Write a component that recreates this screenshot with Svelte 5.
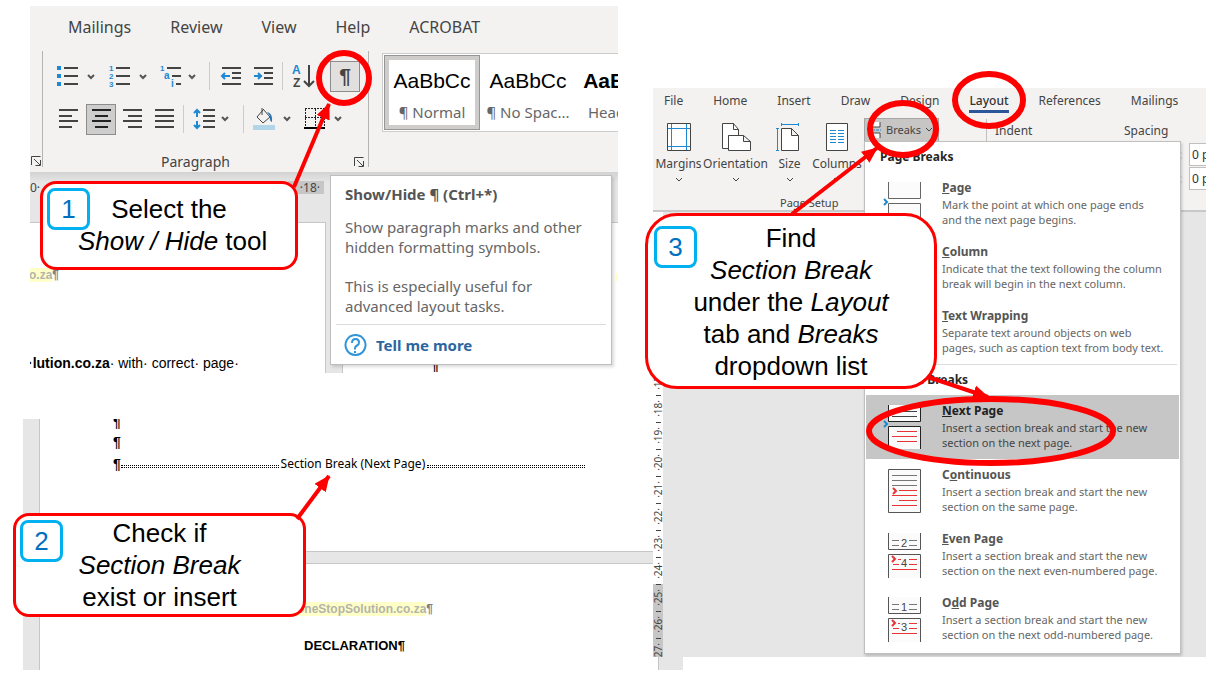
<script lang="ts">
  type Shape = {
    d?: string;
    s?: string;
    f?: string;
    w?: number;
    dash?: string;
    t?: string;
    x?: number;
    y?: number;
    size?: number;
    bold?: boolean;
  };

  type Icon = { w: number; h: number; shapes: Shape[] };

  type Tool = { icon: string; label: string; gap: number; active?: boolean; sep?: boolean };

  const ink = '#444444';
  const blue = '#1e88d2';
  const red = '#e83434';

  const chevron = (x: number, y: number): Shape => ({
    d: `M${x} ${y}l3 3l3-3`,
    s: '#555555',
    w: 2,
  });

  const icons: Record<string, Icon> = {
    bullets: {
      w: 38,
      h: 24,
      shapes: [
        { d: 'M0 2h4v4h-4zM0 10h4v4h-4zM0 18h4v4h-4z', f: blue },
        { d: 'M7 4h14M7 12h14M7 20h14', s: ink, w: 2 },
        chevron(31, 11),
      ],
    },
    numbering: {
      w: 38,
      h: 24,
      shapes: [
        { t: '1', x: 0, y: 7, size: 8, f: blue, bold: true },
        { t: '2', x: 0, y: 15, size: 8, f: blue, bold: true },
        { t: '3', x: 0, y: 23, size: 8, f: blue, bold: true },
        { d: 'M7 4h14M7 12h14M7 20h14', s: ink, w: 2 },
        chevron(31, 11),
      ],
    },
    multilevel: {
      w: 38,
      h: 24,
      shapes: [
        { t: '1', x: 0, y: 7, size: 8, f: blue, bold: true },
        { t: 'a', x: 4, y: 15, size: 10, f: blue, bold: true },
        { t: 'i', x: 11, y: 23, size: 10, f: blue, bold: true },
        { d: 'M7 4h14M12 12h9M16 20h5', s: ink, w: 2 },
        chevron(29, 11),
      ],
    },
    outdent: {
      w: 20,
      h: 24,
      shapes: [
        { d: 'M1 4h19M11 9h9M11 14h9M1 20h19', s: ink, w: 2 },
        { d: 'M1 12h8M4 9l-3 3l3 3', s: blue, w: 2 },
      ],
    },
    indent: {
      w: 20,
      h: 24,
      shapes: [
        { d: 'M1 4h19M11 9h9M11 14h9M1 20h19', s: ink, w: 2 },
        { d: 'M1 12h8M5 9l3 3l-3 3', s: blue, w: 2 },
      ],
    },
    sort: {
      w: 22,
      h: 26,
      shapes: [
        { t: 'A', x: 0, y: 11, size: 12, f: blue, bold: true },
        { t: 'Z', x: 1, y: 24, size: 12, f: ink, bold: true },
        { d: 'M17 2v20M12 18l5 5l5-5', s: ink, w: 2 },
      ],
    },
    left: { w: 20, h: 24, shapes: [{ d: 'M1 3h19M1 9h13M1 14h19M1 20h13', s: ink, w: 2 }] },
    center: { w: 20, h: 24, shapes: [{ d: 'M1 3h19M4 9h13M1 14h19M4 20h13', s: '#222222', w: 2 }] },
    right: { w: 20, h: 24, shapes: [{ d: 'M1 3h19M6 9h14M1 14h19M6 20h14', s: ink, w: 2 }] },
    justify: { w: 20, h: 24, shapes: [{ d: 'M1 3h19M1 9h19M1 14h19M1 20h19', s: ink, w: 2 }] },
    spacing: {
      w: 36,
      h: 24,
      shapes: [
        { d: 'M4 3v7M1 6l3-3l3 3M4 14v7M1 18l3 3l3-3', s: blue, w: 2 },
        { d: 'M10 3h12M10 9h12M10 14h12M10 20h12', s: ink, w: 2 },
        chevron(29, 10),
      ],
    },
    fill: {
      w: 38,
      h: 24,
      shapes: [
        { d: 'M0 18h22v5h-22z', f: '#b3d5ea' },
        { d: 'M10 2l7 8l-7 6l-6-6l6-7M9 1v7', s: ink, w: 1 },
        { d: 'M14 5q6 1 5 10q-3-1-2-6z', f: '#2b77b5' },
        chevron(31, 10),
      ],
    },
    borders: {
      w: 39,
      h: 24,
      shapes: [
        { d: 'M1 1.500h20M1 10.500h20M1.500 2v18M11.500 2v18M20.500 2v18', s: '#222222', w: 1, dash: '2 1' },
        { d: 'M0 21h21', s: '#000000', w: 2 },
        chevron(31, 10),
      ],
    },
    launcher: {
      w: 12,
      h: 12,
      shapes: [{ d: 'M1.500 10V1.500h9M4 4l6 6M10.500 5v5.500h-5', s: ink, w: 1 }],
    },
    down: { w: 8, h: 6, shapes: [{ d: 'M1 1l3 3l3-3', s: ink, w: 1 }] },
    help: {
      w: 24,
      h: 24,
      shapes: [
        { d: 'M12 2a10 10 0 1 0 1 0z', s: '#2f95d8', w: 2 },
        { d: 'M9 10q0-4 3.500-4t3.500 3.500q0 2-2 3t-2 3v1', s: '#2f95d8', w: 2 },
        { d: 'M11 18h2v2h-2z', f: '#2f95d8' },
      ],
    },
    margins: {
      w: 32,
      h: 32,
      shapes: [
        { d: 'M4.500 2.500h23v27h-23z', s: ink, f: '#ffffff', w: 1 },
        { d: 'M8.500 3v26M23.500 3v26M5 7.500h22M5 25.500h22', s: blue, w: 1 },
      ],
    },
    orientation: {
      w: 32,
      h: 32,
      shapes: [
        { d: 'M8.500 27.500h-6v-25h11l5 6v6h-10z', s: ink, f: '#ffffff', w: 1 },
        { d: 'M13.500 2.500v6h5', s: ink, w: 1 },
        { d: 'M8.500 14.500h15l7 6v9h-22zM23.500 14.500v6h7', s: ink, f: '#ffffff', w: 1 },
      ],
    },
    size: {
      w: 32,
      h: 32,
      shapes: [
        { d: 'M7.500 7.500h10l7 7v15h-17zM17.500 7.500v7h7', s: ink, f: '#ffffff', w: 1 },
        { d: 'M3.500 7v23M2 7.500h3M2 29.500h3M7 3.500h18M7.500 2v3M24.500 2v3', s: blue, w: 1 },
      ],
    },
    columns: {
      w: 32,
      h: 32,
      shapes: [
        { d: 'M5.500 2.500h21v27h-21z', s: ink, f: '#ffffff', w: 1 },
        {
          d: 'M9 9.500h6M17 9.500h6M9 12.500h6M17 12.500h6M9 15.500h6M17 15.500h6M9 18.500h6M17 18.500h6M9 21.500h6M17 21.500h6',
          s: blue,
          w: 1,
        },
      ],
    },
    breaks: {
      w: 14,
      h: 18,
      shapes: [
        { d: 'M2 1v5h10v-5M2 17v-5h10v5', s: ink, f: '#ffffff', w: 1 },
        { d: 'M0 9h13', s: blue, w: 1, dash: '3 1' },
      ],
    },
    page: {
      w: 40,
      h: 46,
      shapes: [
        { d: 'M6.500 0v16.500h32v-16.500M6.500 46v-24.500h32v24.500', s: '#666666', f: '#fbfbfb', w: 1 },
        { d: 'M2 17l3 3l-3 3', s: blue, w: 2 },
      ],
    },
    nextPage: {
      w: 40,
      h: 46,
      shapes: [
        { d: 'M6.500 0v16.500h32v-16.500M6.500 44v-22.500h32v22.500', s: '#222222', f: '#fbfbfb', w: 1 },
        { d: 'M10 6.500h25M10 11.500h25', s: ink, w: 1 },
        { d: 'M15 26.500h20M10 31.500h25M15 36.500h20', s: red, w: 1 },
        { d: 'M2 16l3 3l-3 3', s: blue, w: 2 },
      ],
    },
    continuous: {
      w: 40,
      h: 46,
      shapes: [
        { d: 'M6.500 .5h32v43h-32z', s: '#555555', f: '#fbfbfb', w: 1 },
        { d: 'M10 6.500h25M10 11.500h25M10 16.500h25', s: '#777777', w: 1 },
        { d: 'M17 21.500h18M10 26.500h25M17 31.500h18M10 36.500h25', s: red, w: 1 },
        { d: 'M11 19l3 3l-3 3', s: red, w: 2 },
      ],
    },
    evenPage: {
      w: 40,
      h: 46,
      shapes: [
        { d: 'M6.500 0v16.500h32v-16.500M6.500 45v-23.500h32v23.500', s: '#555555', f: '#fbfbfb', w: 1 },
        { d: 'M10 7.500h7M10 12.500h7M27 7.500h8M27 12.500h8', s: '#777777', w: 1 },
        { d: 'M16 26.500h3M27 26.500h8M11 31.500h6M27 31.500h8M10 36.500h25', s: red, w: 1 },
        { d: 'M10 23l3 3l-3 3', s: red, w: 2 },
        { t: '2', x: 19, y: 14, size: 11, f: ink },
        { t: '4', x: 19, y: 34, size: 11, f: ink },
      ],
    },
    oddPage: {
      w: 40,
      h: 46,
      shapes: [
        { d: 'M6.500 0v16.500h32v-16.500M6.500 45v-23.500h32v23.500', s: '#555555', f: '#fbfbfb', w: 1 },
        { d: 'M10 7.500h7M10 12.500h7M27 7.500h8M27 12.500h8', s: '#777777', w: 1 },
        { d: 'M16 26.500h2M27 26.500h8M11 31.500h6M27 31.500h8M10 36.500h25', s: red, w: 1 },
        { d: 'M10 23l3 3l-3 3', s: red, w: 2 },
        { t: '1', x: 19, y: 14, size: 11, f: ink },
        { t: '3', x: 19, y: 34, size: 11, f: ink },
      ],
    },
  };

  const topTools: Tool[] = [
    { icon: 'bullets', label: 'Bullets', gap: 14 },
    { icon: 'numbering', label: 'Numbering', gap: 14 },
    { icon: 'multilevel', label: 'Multilevel List', gap: 13 },
    { icon: '', label: '', gap: 11, sep: true },
    { icon: 'outdent', label: 'Decrease Indent', gap: 11 },
    { icon: 'indent', label: 'Increase Indent', gap: 12 },
    { icon: '', label: '', gap: 9, sep: true },
    { icon: 'sort', label: 'Sort', gap: 9 },
  ];

  const bottomTools: Tool[] = [
    { icon: 'left', label: 'Align Left', gap: 15 },
    { icon: 'center', label: 'Center', gap: 8, active: true },
    { icon: 'right', label: 'Align Right', gap: 6 },
    { icon: 'justify', label: 'Justify', gap: 12 },
    { icon: '', label: '', gap: 9, sep: true },
    { icon: 'spacing', label: 'Line Spacing', gap: 9 },
    { icon: '', label: '', gap: 14, sep: true },
    { icon: 'fill', label: 'Shading', gap: 9 },
    { icon: 'borders', label: 'Borders', gap: 13 },
  ];

  const homeTabs = ['Mailings', 'Review', 'View', 'Help', 'ACROBAT'];
  const layoutTabs = ['File', 'Home', 'Insert', 'Draw', 'Design', 'Layout', 'References', 'Mailings'];

  const setupTools = [
    { icon: 'margins', label: 'Margins', w: 51 },
    { icon: 'orientation', label: 'Orientation', w: 63 },
    { icon: 'size', label: 'Size', w: 45 },
    { icon: 'columns', label: 'Columns', w: 50 },
  ];

  // [before, key, after] splits the title around its access key
  const pageBreaks = [
    { icon: 'page', title: ['', 'P', 'age'], lines: ['Mark the point at which one page ends', 'and the next page begins.'] },
    { icon: 'page', title: ['', 'C', 'olumn'], lines: ['Indicate that the text following the column', 'break will begin in the next column.'] },
    { icon: 'page', title: ['', 'T', 'ext Wrapping'], lines: ['Separate text around objects on web', 'pages, such as caption text from body text.'] },
  ];

  const sectionBreaks = [
    { icon: 'nextPage', title: ['', 'N', 'ext Page'], lines: ['Insert a section break and start the new', 'section on the next page.'], active: true },
    { icon: 'continuous', title: ['C', 'o', 'ntinuous'], lines: ['Insert a section break and start the new', 'section on the same page.'] },
    { icon: 'evenPage', title: ['', 'E', 'ven Page'], lines: ['Insert a section break and start the new', 'section on the next even-numbered page.'] },
    { icon: 'oddPage', title: ['O', 'd', 'd Page'], lines: ['Insert a section break and start the new', 'section on the next odd-numbered page.'] },
  ];

  const rulerMarks = Array.from({ length: 16 }, (_, i) => 12 + i);

  let before = $state('0 pt');
  let after = $state('0 pt');
</script>

{#snippet glyph(name: string)}
  {@const icon = icons[name]}
  <svg width={icon.w} height={icon.h} viewBox="0 0 {icon.w} {icon.h}" aria-hidden="true">
    {#each icon.shapes as p}
      {#if p.t}
        <text x={p.x} y={p.y} font-size={p.size} fill={p.f} font-weight={p.bold ? 700 : 400}>{p.t}</text>
      {:else}
        <path
          d={p.d}
          stroke={p.s ?? 'none'}
          fill={p.f ?? 'none'}
          stroke-width={p.w}
          stroke-dasharray={p.dash}
        />
      {/if}
    {/each}
  </svg>
{/snippet}

{#snippet toolRow(tools: Tool[])}
  {#each tools as tool}
    {#if tool.sep}
      <span class="tool-sep" style="margin-left: {tool.gap}px"></span>
    {:else}
      <button
        type="button"
        class="tool"
        class:active={tool.active}
        aria-label={tool.label}
        style="margin-left: {tool.gap}px"
      >
        {@render glyph(tool.icon)}
      </button>
    {/if}
  {/each}
{/snippet}

{#snippet breakItem(item: { icon: string; title: string[]; lines: string[]; active?: boolean })}
  <button type="button" class="item" class:active={item.active} role="menuitem">
    {@render glyph(item.icon)}
    <span class="item-text">
      <b>{item.title[0]}<u>{item.title[1]}</u>{item.title[2]}</b>
      {#each item.lines as line}
        <span>{line}</span>
      {/each}
    </span>
  </button>
{/snippet}

<main class="board">
  <div class="left-col">
    <section class="shot home">
      <div class="ribbon">
        <nav class="tabs">
          {#each homeTabs as tab}
            <button type="button">{tab}</button>
          {/each}
        </nav>
        <div class="groups">
          <div class="stub">{@render glyph('launcher')}</div>
          <div class="paragraph">
            <div class="tool-row">
              {@render toolRow(topTools)}
              <button type="button" class="tool active pilcrow" aria-label="Show/Hide">¶</button>
            </div>
            <div class="tool-row">{@render toolRow(bottomTools)}</div>
            <div class="group-label">
              <span>Paragraph</span>
              {@render glyph('launcher')}
            </div>
          </div>
          <div class="gallery">
            <button type="button" class="style-card selected">
              <span class="sample">AaBbCc</span>
              <span class="style-name">¶ Normal</span>
            </button>
            <button type="button" class="style-card">
              <span class="sample">AaBbCc</span>
              <span class="style-name">¶ No Spac...</span>
            </button>
            <button type="button" class="style-card">
              <span class="sample strong">AaBbCc</span>
              <span class="style-name">Heading 1</span>
            </button>
          </div>
        </div>
      </div>

      <div class="h-ruler">
        <span>0·</span>
        <span class="margin-end">·18·</span>
      </div>
      <div class="pages">
        <div class="page first">
          <p class="mail"><mark>o.za</mark>¶</p>
          <p class="line"><b>·lution.co.za</b>· with· correct· page·</p>
        </div>
        <div class="page second"><mark></mark><span>¶</span></div>
      </div>

      <div class="tooltip" role="tooltip">
        <h2>Show/Hide ¶ (Ctrl+*)</h2>
        <p>Show paragraph marks and other<br />hidden formatting symbols.</p>
        <p>This is especially useful for<br />advanced layout tasks.</p>
        <a href="#help">{@render glyph('help')}Tell me more</a>
      </div>
    </section>

    <section class="shot document">
      <div class="sheet top">
        <p>¶</p>
        <p>¶</p>
        <p class="section-break">
          ¶<span class="dots"></span><span class="break-name">Section Break (Next Page)</span><span class="dots"></span>
        </p>
      </div>
      <div class="sheet next">
        <p class="mail"><mark>OneStopSolution.co.za</mark>¶</p>
        <p class="declaration">DECLARATION¶</p>
      </div>
    </section>
  </div>

  <section class="shot layout">
    <div class="ribbon">
      <nav class="tabs">
        {#each layoutTabs as tab}
          <button type="button" class:current={tab === 'Layout'}>{tab}</button>
        {/each}
      </nav>
      <div class="groups">
        <div class="setup">
          <div class="setup-tools">
            {#each setupTools as tool}
              <button type="button" class="big-tool" style="width: {tool.w}px">
                {@render glyph(tool.icon)}
                <span>{tool.label}</span>
                {@render glyph('down')}
              </button>
            {/each}
            <div class="breaks">
              <button type="button" class="breaks-btn" aria-haspopup="menu" aria-expanded="true">
                {@render glyph('breaks')}
                Breaks
                {@render glyph('down')}
              </button>
              <div class="menu" role="menu">
                <h3>Page Breaks</h3>
                {#each pageBreaks as item}
                  {@render breakItem(item)}
                {/each}
                <hr />
                <h3>Section Breaks</h3>
                {#each sectionBreaks as item}
                  {@render breakItem(item)}
                {/each}
              </div>
            </div>
          </div>
          <span class="setup-label">Page Setup</span>
        </div>
        <div class="indent">Indent</div>
        <div class="spacing">
          <span>Spacing</span>
          <label><span>Before:</span><input bind:value={before} /></label>
          <label><span>After:</span><input bind:value={after} /></label>
        </div>
      </div>
    </div>
    <div class="v-ruler">
      {#each rulerMarks as mark}
        <div class="mark" class:outside={mark >= 25}><i></i><span>·{mark}·</span></div>
      {/each}
    </div>
  </section>

  <div class="callout one">
    <span class="badge">1</span>
    <p>Select the<br />&nbsp;<em>Show / Hide</em> tool</p>
  </div>
  <div class="callout two">
    <span class="badge">2</span>
    <p>Check if<br /><em>Section Break</em><br />exist or insert</p>
  </div>
  <div class="callout three">
    <span class="badge">3</span>
    <p>Find<br /><em>Section Break</em><br />under the <em>Layout</em><br />tab and <em>Breaks</em><br />dropdown list</p>
  </div>

  <svg class="marks" viewBox="0 0 1219 683" aria-hidden="true">
    <defs>
      <marker id="head" markerUnits="userSpaceOnUse" markerWidth="16" markerHeight="16" refX="15" refY="7" orient="auto">
        <path d="M0 0L16 7L0 14z" fill="#ff0000" />
      </marker>
    </defs>
    <circle cx="344" cy="78" r="25" />
    <ellipse cx="989" cy="100" rx="34" ry="26" />
    <ellipse cx="903" cy="129" rx="33" ry="26" />
    <ellipse cx="991" cy="431" rx="122" ry="32" />
    <path d="M294 187L329 104" marker-end="url(#head)" />
    <path d="M297 519L329 476" marker-end="url(#head)" />
    <path d="M792 214L877 148" marker-end="url(#head)" />
    <path d="M928 377L988 397" marker-end="url(#head)" />
  </svg>
</main>

<style>
  :global(body) {
    margin: 0;
    background: #ffffff;
  }

  .board {
    position: relative;
    display: grid;
    grid-template-columns: minmax(0, 653fr) minmax(0, 553fr);
    align-items: start;
    padding-right: 13px;
    overflow: hidden;
    font-family: 'Noto Sans', 'Open Sans', sans-serif;
    font-size: 12px;
    line-height: 16px;
    color: #444444;
  }

  button {
    border: 0;
    background: none;
    padding: 0;
    font: inherit;
    color: inherit;
    cursor: pointer;
  }

  svg {
    display: block;
    flex: none;
    overflow: visible;
    font-family: 'Liberation Sans', sans-serif;
  }

  p,
  h2,
  h3 {
    margin: 0;
  }

  mark {
    background: #ffffc8;
    color: #b4b4a8;
  }

  .shot {
    position: relative;
  }

  .ribbon {
    background: #f3f2f1;
  }

  .tabs,
  .groups {
    display: flex;
  }

  /* Home tab window */

  .home {
    margin: 6px 35px 0 30px;
    height: 367px;
    overflow: hidden;
    background: linear-gradient(#d2d2d2 0, #e6e6e6 10px) 0 166px no-repeat, #e6e6e6;
  }

  .home .tabs {
    gap: 39px;
    padding: 11px 0 9px 38px;
    font-size: 16px;
    line-height: 20px;
  }

  .home .groups {
    height: 126px;
    padding-top: 5px;
    box-sizing: border-box;
  }

  .stub {
    display: flex;
    align-items: flex-end;
    width: 12px;
    height: 116px;
    border-right: 1px solid #b4b4b4;
  }

  .paragraph {
    width: 325px;
    height: 116px;
    border-right: 1px solid #b4b4b4;
  }

  .tool-row {
    display: flex;
    align-items: center;
    height: 42px;
    padding-top: 4px;
  }

  .tool-row + .tool-row {
    height: 30px;
    padding-top: 7px;
  }

  .tool.active {
    display: grid;
    place-items: center;
    box-sizing: border-box;
    width: 30px;
    height: 31px;
    background: #cdcdcd;
    border: 1px solid #8c8c8c;
  }

  .tool.pilcrow {
    margin-left: 16px;
    background: #e1e0df;
    font-family: 'Liberation Sans', sans-serif;
    font-size: 21px;
    font-weight: 700;
    line-height: 24px;
  }

  .tool-sep {
    width: 1px;
    height: 28px;
    background: #cccccc;
  }

  .group-label {
    display: flex;
    align-items: center;
    justify-content: space-between;
    padding: 20px 3px 0 118px;
    font-size: 14px;
  }

  .gallery {
    display: flex;
    flex: 1;
    min-width: 0;
    height: 77px;
    margin: 2px 0 0 13px;
    overflow: hidden;
    background: #ffffff;
    border: 1px solid #cccccc;
    border-right: 0;
  }

  .style-card {
    display: flex;
    flex: none;
    flex-direction: column;
    align-items: center;
    box-sizing: border-box;
    width: 96px;
    height: 75px;
    margin-top: 1px;
    padding-top: 14px;
  }

  .style-card.selected {
    margin-left: 1px;
    padding-top: 13px;
    border: 1px solid #969696;
    box-shadow: inset 0 0 0 4px #cfcdcc;
  }

  .sample {
    font-family: 'Liberation Sans', sans-serif;
    font-size: 21px;
    line-height: 24px;
    color: #000000;
  }

  .sample.strong {
    font-weight: 700;
  }

  .style-name {
    margin-top: 10px;
    font-size: 15px;
    line-height: 18px;
    color: #666666;
    white-space: nowrap;
  }

  .h-ruler {
    display: flex;
    justify-content: space-between;
    width: 294px;
    height: 50px;
    padding-top: 9px;
    box-sizing: border-box;
    line-height: 13px;
  }

  .margin-end {
    height: 13px;
    width: 36px;
    background: #c6c6c6;
    text-align: right;
    padding-right: 4px;
    box-sizing: border-box;
  }

  .pages {
    display: flex;
    gap: 16px;
    height: 151px;
  }

  .page {
    box-sizing: border-box;
    background: #ffffff;
    border: 1px solid #c6c6c6;
    border-bottom: 0;
  }

  .page.first {
    width: 296px;
    border-left: 0;
    font-family: 'Liberation Sans', sans-serif;
    color: #000000;
  }

  .mail {
    font-family: 'Liberation Sans', sans-serif;
    font-weight: 700;
    color: #808080;
  }

  .page.first .mail {
    margin: 44px 0 72px -1px;
  }

  .page.first .line {
    font-size: 14px;
    margin-left: -2px;
    white-space: nowrap;
  }

  .page.second {
    display: flex;
    flex-direction: column;
    flex: 1;
    border-right: 0;
    padding: 50px 0 0 88px;
    font-family: 'Liberation Sans', sans-serif;
    font-weight: 700;
    font-size: 14px;
    color: #000000;
  }

  .page.second mark {
    align-self: flex-end;
    width: 2px;
    height: 8px;
    margin-bottom: 76px;
  }

  .tooltip {
    position: absolute;
    top: 169px;
    left: 300px;
    box-sizing: border-box;
    width: 282px;
    padding: 8px 5px 7px;
    background: #ffffff;
    border: 1px solid #bebebe;
    box-shadow: 2px 2px 3px rgba(0, 0, 0, 0.15);
    font-size: 15px;
    line-height: 20px;
    color: #666666;
    white-space: nowrap;
  }

  .tooltip h2 {
    padding-left: 9px;
    font-size: 15px;
    line-height: 20px;
    color: #555555;
  }

  .tooltip p {
    margin-bottom: 19px;
    padding-left: 9px;
  }

  .tooltip h2 + p {
    margin-top: 13px;
  }

  .tooltip p + p {
    margin-bottom: 8px;
  }

  .tooltip a {
    display: flex;
    align-items: center;
    gap: 9px;
    padding: 8px 0 0 7px;
    border-top: 1px solid #dcdcdc;
    font-weight: 700;
    color: #2b669f;
    text-decoration: none;
  }

  /* Document window */

  .document {
    height: 251px;
    margin: 46px -30px 0 23px;
    padding: 0 24px 0 16px;
    box-sizing: border-box;
    overflow: hidden;
    background: #e6e6e6;
  }

  .sheet {
    box-sizing: border-box;
    background: #ffffff;
    border: 1px solid #c6c6c6;
    font-family: 'Liberation Sans', sans-serif;
    color: #000000;
  }

  .sheet.top {
    height: 133px;
    padding: 0 73px;
    border-top: 0;
    font-size: 14px;
    font-weight: 700;
    line-height: 20px;
    overflow: hidden;
  }

  .sheet.top p:first-child {
    margin-top: -7px;
  }

  .sheet.next {
    height: 120px;
    margin-top: 11px;
    padding-top: 37px;
  }

  .sheet.next .mail {
    padding-left: 255px;
  }

  .section-break {
    display: flex;
    align-items: center;
    padding-top: 2px;
  }

  .dots {
    flex: 1;
    height: 1px;
    margin-top: 4px;
    border-top: 1px dotted #000000;
    border-bottom: 1px dotted #000000;
  }

  .break-name {
    padding: 0 2px;
    font-family: 'Noto Sans', sans-serif;
    font-size: 12px;
    font-weight: 400;
  }

  .declaration {
    margin-top: 21px;
    padding-left: 264px;
    font-size: 13px;
    font-weight: 700;
  }

  /* Layout tab window */

  .layout {
    height: 569px;
    margin-top: 88px;
    overflow: hidden;
    background: #e6e6e6;
  }

  .layout .ribbon {
    height: 124px;
    box-sizing: border-box;
    border-bottom: 2px solid #c8c8c8;
  }

  .layout .tabs {
    gap: 30px;
    padding: 4px 0 0 11px;
  }

  .layout .tabs button {
    height: 21px;
    padding-top: 1px;
    padding-bottom: 1px;
    box-sizing: border-box;
    border-bottom: 3px solid transparent;
  }

  .layout .tabs .current {
    border-bottom-color: #2b579a;
    font-weight: 500;
    color: #333333;
  }

  .setup {
    display: flex;
    flex: none;
    flex-direction: column;
    width: 333px;
  }

  .setup-tools {
    display: flex;
    align-items: flex-start;
    height: 82px;
  }

  .big-tool {
    display: flex;
    flex: none;
    flex-direction: column;
    align-items: center;
    padding-top: 8px;
    white-space: nowrap;
  }

  .big-tool span {
    margin: 3px 0 5px;
  }

  .setup-label {
    padding-left: 127px;
    font-size: 11px;
  }

  .breaks {
    position: relative;
    margin: 5px 0 0 2px;
  }

  .breaks-btn {
    display: flex;
    align-items: center;
    gap: 4px;
    box-sizing: border-box;
    width: 75px;
    height: 24px;
    padding-left: 3px;
    background: #c8c6c4;
    border: 1px solid #a6a6a6;
    font-size: 11px;
  }

  .menu {
    position: absolute;
    z-index: 1;
    top: 23px;
    left: 0;
    box-sizing: border-box;
    width: 317px;
    padding-bottom: 2px;
    background: #ffffff;
    border: 1px solid #c0c0c0;
    box-shadow: 1px 2px 3px rgba(0, 0, 0, 0.2);
  }

  .menu h3 {
    padding: 7px 0 7px 15px;
    font-size: 12px;
    line-height: 16px;
    color: #262626;
  }

  .menu hr {
    margin: 0 3px 0 65px;
    border: 0;
    border-top: 1px solid #dcdcdc;
  }

  .item {
    display: flex;
    gap: 20px;
    box-sizing: border-box;
    width: 313px;
    height: 64px;
    margin-left: 1px;
    padding: 10px 0 0 16px;
    text-align: left;
    color: #666666;
  }

  .item.active {
    background: #c6c6c6;
    color: #444444;
  }

  .item-text {
    display: flex;
    flex-direction: column;
    margin-top: -2px;
    font-size: 11px;
    line-height: 15px;
    white-space: nowrap;
  }

  .item-text b {
    margin-bottom: 1px;
    font-size: 12px;
    line-height: 16px;
    color: #555555;
  }

  .item.active b {
    color: #222222;
  }

  .indent {
    flex: none;
    width: 120px;
    height: 22px;
    margin-top: 6px;
    padding: 4px 0 0 8px;
    box-sizing: border-box;
    border-left: 1px solid #c0c0c0;
  }

  .spacing {
    display: flex;
    flex: none;
    flex-direction: column;
    padding: 10px 0 0 18px;
  }

  .spacing label {
    display: flex;
    align-items: center;
    margin-bottom: 1px;
  }

  .spacing label span {
    width: 58px;
    text-align: right;
  }

  .spacing > span {
    margin-bottom: 4px;
  }

  .spacing input {
    box-sizing: border-box;
    width: 60px;
    height: 23px;
    margin-left: 7px;
    padding: 0 2px;
    border: 1px solid #c0c0c0;
    font: inherit;
    color: #333333;
  }

  .v-ruler {
    width: 10px;
    padding-top: 21px;
    background: #ffffff;
  }

  .mark {
    display: flex;
    flex-direction: column;
    align-items: center;
    height: 27px;
    font-size: 10px;
    line-height: 10px;
  }

  .mark.outside {
    background: #c6c6c6;
  }

  .mark i {
    width: 5px;
    height: 1px;
    background: #444444;
  }

  .mark span {
    margin-top: 4px;
    writing-mode: vertical-rl;
    transform: rotate(180deg);
  }

  /* Annotations lying over the windows */

  .callout {
    position: absolute;
    z-index: 2;
    box-sizing: border-box;
    background: #ffffff;
    border: 3px solid #ff0000;
    border-radius: 16px;
    font-family: 'Liberation Sans', Arial, sans-serif;
    font-size: 26px;
    line-height: 32px;
    text-align: center;
    color: #000000;
  }

  .callout.one {
    top: 181px;
    left: 40px;
    width: 258px;
    padding: 9px 0 10px;
  }

  .callout.two {
    top: 513px;
    left: 13px;
    width: 293px;
    padding: 1px 0;
  }

  .callout.three {
    top: 213px;
    left: 645px;
    width: 292px;
    padding: 6px 0 4px;
    border-radius: 32px;
  }

  .badge {
    position: absolute;
    top: 4px;
    left: 4px;
    width: 37px;
    height: 36px;
    border: 3px solid #00b0f0;
    border-radius: 8px;
    line-height: 36px;
    color: #0070c0;
  }

  .three .badge {
    top: 10px;
    left: 6px;
  }

  .marks {
    position: absolute;
    z-index: 3;
    top: 0;
    left: 0;
    width: 100%;
    fill: none;
    stroke: #ff0000;
    stroke-width: 6;
    pointer-events: none;
  }

  .marks path {
    stroke-width: 4;
  }

  .marks marker path {
    stroke: none;
  }
</style>
